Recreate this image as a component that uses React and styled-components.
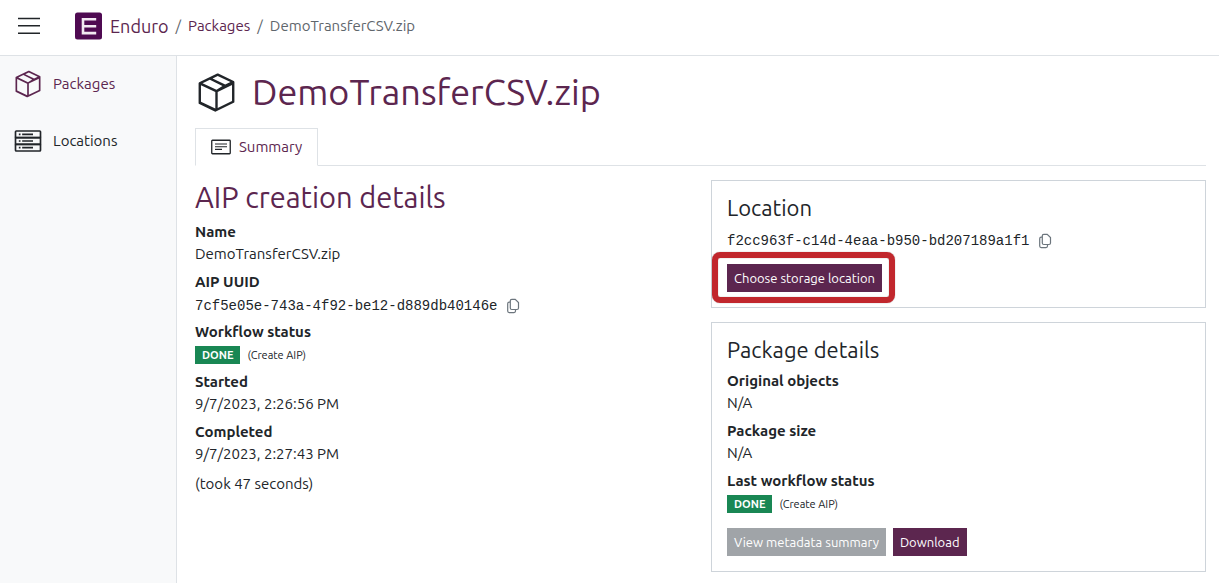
import React from "react";
import styled, { createGlobalStyle } from "styled-components";

const GlobalStyle = createGlobalStyle`
  *, *::before, *::after { box-sizing: border-box; }
  body {
    margin: 0;
    background: #fff;
    color: #212529;
    font: 15px/22px Ubuntu, "Noto Sans", "Open Sans", sans-serif;
  }
  h1, h2, h3, p, dl, dd, ol, ul { margin: 0; padding: 0; font-weight: 400; }
  ol, ul { list-style: none; }
  a { color: inherit; text-decoration: none; }
  button { font-family: inherit; border: 0; cursor: pointer; }
  svg { display: block; flex: none; }
`;

const purple = "#5c264f";

const Page = styled.div`
  min-height: 100vh;
  display: flex;
  flex-direction: column;
`;

const Header = styled.header`
  display: flex;
  align-items: center;
  height: 56px;
  padding: 0 16px 3px;
  border-bottom: 1px solid #dee2e6;
`;

const MenuButton = styled.button`
  padding: 0;
  margin-right: 33px;
  background: none;
  color: #212529;
`;

const Breadcrumb = styled.ol`
  display: flex;
  align-items: center;
  color: #5f666c;
`;

const Crumb = styled.li`
  display: flex;
  align-items: center;
  & + &::before {
    content: "/";
    padding: 0 7px;
    font-size: 15px;
  }
  a { color: ${purple}; }
`;

const Brand = styled.a`
  display: flex;
  align-items: center;
  gap: 7px;
  font-size: 18px;
`;

const Body = styled.div`
  flex: 1;
  display: flex;
`;

const Sidebar = styled.nav`
  flex: none;
  width: 177px;
  background: #f8f9fa;
  border-right: 1px solid #dee2e6;
`;

const SideLink = styled.a`
  display: flex;
  align-items: center;
  gap: 10px;
  height: 57px;
  padding: 0 0 1px 13px;
  && { color: ${(p) => (p.$active ? purple : "#212529")}; }
`;

const Main = styled.main`
  flex: 1;
  min-width: 0;
  padding: 14px 13px 11px 18px;
`;

const Title = styled.h1`
  display: flex;
  align-items: center;
  gap: 14px;
  color: ${purple};
  font-size: 36px;
  line-height: 44px;
  svg { color: #212529; }
`;

const Tabs = styled.div`
  display: flex;
  margin: 14px 0;
  border-bottom: 1px solid #dee2e6;
`;

const Tab = styled.button`
  display: flex;
  align-items: center;
  gap: 8px;
  height: 38px;
  margin-bottom: -1px;
  padding: 0 15px 1px;
  border: 1px solid #dee2e6;
  border-bottom-color: #fff;
  background: #fff;
  color: ${purple};
  font-size: 15px;
  svg { color: #212529; }
`;

const Columns = styled.div`
  display: grid;
  grid-template-columns: 1fr 1fr;
  column-gap: 21px;
`;

const Stack = styled.div`
  display: flex;
  flex-direction: column;
  gap: 14px;
`;

const SectionTitle = styled.h2`
  margin-bottom: 6px;
  color: ${purple};
  font-size: 29px;
  line-height: 35px;
`;

const Card = styled.section`
  padding: 14px 15px 15px;
  border: 1px solid #ced4da;
`;

const CardTitle = styled.h3`
  margin-bottom: 7px;
  font-size: 22px;
  line-height: 26px;
`;

const Term = styled.dt`
  font-weight: 700;
`;

const Value = styled.dd`
  min-height: 22px;
  & + dt { margin-top: 6px; }
`;

const Note = styled.p`
  margin-top: 8px;
`;

const IdRow = styled.span`
  display: flex;
  align-items: center;
  gap: 9px;
  height: 22px;
  padding-top: 4px;
  font-family: "Liberation Mono", monospace;
  font-size: 14px;
`;

const CopyButton = styled.button`
  padding: 0;
  background: none;
  color: #6c757d;
`;

const StatusRow = styled.span`
  display: flex;
  align-items: center;
  gap: 7px;
  height: 22px;
  padding-top: 2px;
  font-size: 11px;
`;

const Badge = styled.span`
  padding: 0 7px;
  background: #198754;
  color: #fff;
  font-weight: 700;
  line-height: 18px;
`;

const Actions = styled.div`
  display: flex;
  gap: 7px;
  margin-top: 14px;
`;

const Button = styled.button`
  height: 28px;
  padding: 0 7px;
  background: ${purple};
  color: #fff;
  font-size: 13px;
  white-space: nowrap;
  &:disabled { background: #a0a4a8; cursor: default; }
`;

const Highlight = styled.div`
  position: relative;
  &::after {
    content: "";
    position: absolute;
    inset: -12px -13px -11px -15px;
    border: 6px solid #c1272d;
    border-radius: 8px;
    box-shadow: 0 0 1px #777, inset 0 0 1px #777;
    pointer-events: none;
  }
`;

function BoxIcon({ size }) {
  return (
    <svg width={size} height={size} viewBox="0 0 36 36" fill="currentColor" aria-hidden="true">
      <path fillRule="evenodd" d="M32.43 8.35l-13-6.21a1 1 0 0 0-.87 0l-15 7.24a1 1 0 0 0-.56.9v16.55a1 1 0 0 0 .57.9l13 6.19a1 1 0 0 0 .87 0l15-7.24a1 1 0 0 0 .56-.9V9.25a1 1 0 0 0-.57-.9zM19 4.15l10.7 5.11-4.4 2.12-10.6-5.15zM17 31.42l-12-5.72V11.85l12 5.72zM18 15.8L6.3 10.27l6.1-2.95 10.6 5.16zM31 25.2l-12 5.8V17.5l12-5.79z" />
    </svg>
  );
}

function RackIcon() {
  return (
    <svg width="30" height="30" viewBox="0 0 36 36" fill="none" stroke="currentColor" strokeWidth="2" aria-hidden="true">
      <rect x="3" y="6" width="30" height="8" rx="1" />
      <rect x="3" y="14" width="30" height="8" />
      <rect x="3" y="22" width="30" height="8" rx="1" />
      <path d="M7 10h2M11 10h13M7 18h2M11 18h13M7 26h2M11 26h13" />
    </svg>
  );
}

function SummaryIcon() {
  return (
    <svg width="20" height="16" viewBox="0 0 20 16" fill="none" stroke="currentColor" aria-hidden="true">
      <rect x=".75" y="1.25" width="18.5" height="13.5" rx=".7" strokeWidth="1.3" />
      <path d="M4 5h12M4 7.7h12M4 10.4h7" strokeWidth="1.1" />
    </svg>
  );
}

function CopyIcon() {
  return (
    <svg width="14" height="16" viewBox="0 0 14 16" fill="none" stroke="currentColor" strokeWidth="1.2" aria-hidden="true">
      <path d="M5.800 1.300h3.400l3.300 3.200v5.500a1.500 1.500 0 0 1-1.500 1.500H5.800A1.500 1.500 0 0 1 4.300 10V2.800a1.500 1.500 0 0 1 1.500-1.500z" />
      <path d="M4.200 4.200H3.200A1.500 1.500 0 0 0 1.700 5.700v7.400a1.500 1.500 0 0 0 1.500 1.500h4.800a1.500 1.500 0 0 0 1.500-1.500v-1.200" />
    </svg>
  );
}

function CopyableId({ id }) {
  return (
    <IdRow>
      {id}
      <CopyButton type="button" aria-label="Copy to clipboard"><CopyIcon /></CopyButton>
    </IdRow>
  );
}

function Status() {
  return (
    <StatusRow>
      <Badge>DONE</Badge>
      (Create AIP)
    </StatusRow>
  );
}

export default function App() {
  return (
    <Page>
      <GlobalStyle />
      <Header>
        <MenuButton type="button" aria-label="Toggle navigation">
          <svg width="26" height="20" viewBox="0 0 26 20" stroke="currentColor" strokeWidth="1.5" aria-hidden="true">
            <path d="M2 2.500h22M2 9.800h22M2 17.300h22" />
          </svg>
        </MenuButton>
        <Breadcrumb>
          <Crumb>
            <Brand href="#">
              <svg width="28" height="28" viewBox="0 0 28 28" aria-hidden="true">
                <rect x="0" y="0.500" width="27" height="27" rx="2.500" fill="#4f0a52" />
                <path d="M21.200 7.300H8v13.800h13.200M8 14.200h13.200" fill="none" stroke="#f3e9f3" strokeWidth="2.600" />
              </svg>
              Enduro
            </Brand>
          </Crumb>
          <Crumb><a href="#packages">Packages</a></Crumb>
          <Crumb aria-current="page">DemoTransferCSV.zip</Crumb>
        </Breadcrumb>
      </Header>
      <Body>
        <Sidebar>
          <SideLink href="#packages" $active><BoxIcon size={30} />Packages</SideLink>
          <SideLink href="#locations"><RackIcon />Locations</SideLink>
        </Sidebar>
        <Main>
          <Title><BoxIcon size={43} />DemoTransferCSV.zip</Title>
          <Tabs>
            <Tab type="button"><SummaryIcon />Summary</Tab>
          </Tabs>
          <Columns>
            <div>
              <SectionTitle>AIP creation details</SectionTitle>
              <dl>
                <Term>Name</Term>
                <Value>DemoTransferCSV.zip</Value>
                <Term>AIP UUID</Term>
                <Value><CopyableId id="7cf5e05e-743a-4f92-be12-d889db40146e" /></Value>
                <Term>Workflow status</Term>
                <Value><Status /></Value>
                <Term>Started</Term>
                <Value>9/7/2023, 2:26:56 PM</Value>
                <Term>Completed</Term>
                <Value>
                  9/7/2023, 2:27:43 PM
                  <Note>(took 47 seconds)</Note>
                </Value>
              </dl>
            </div>
            <Stack>
              <Card>
                <CardTitle>Location</CardTitle>
                <CopyableId id="f2cc963f-c14d-4eaa-b950-bd207189a1f1" />
                <Actions>
                  <Highlight>
                    <Button type="button">Choose storage location</Button>
                  </Highlight>
                </Actions>
              </Card>
              <Card>
                <CardTitle>Package details</CardTitle>
                <dl>
                  <Term>Original objects</Term>
                  <Value>N/A</Value>
                  <Term>Package size</Term>
                  <Value>N/A</Value>
                  <Term>Last workflow status</Term>
                  <Value><Status /></Value>
                </dl>
                <Actions>
                  <Button type="button" disabled>View metadata summary</Button>
                  <Button type="button">Download</Button>
                </Actions>
              </Card>
            </Stack>
          </Columns>
        </Main>
      </Body>
    </Page>
  );
}
